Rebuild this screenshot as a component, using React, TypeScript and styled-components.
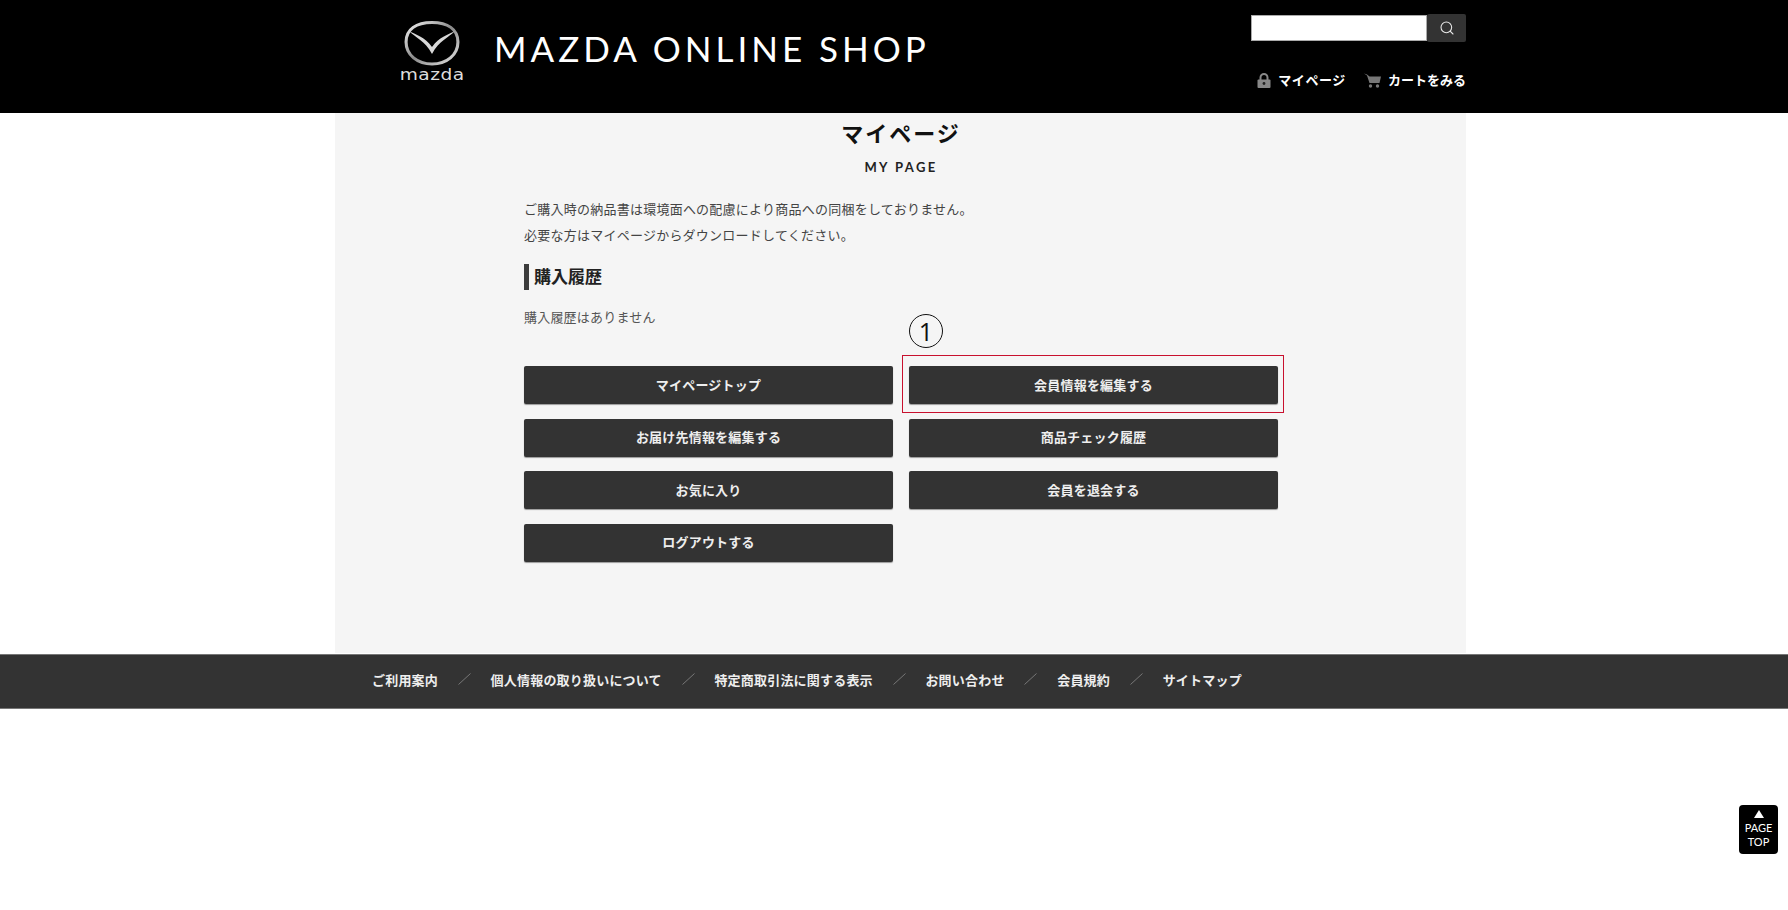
import React from 'react';
import styled, { createGlobalStyle } from 'styled-components';
import { Search } from 'lucide-react';

const JP = `"Noto Sans CJK JP", "Noto Sans", sans-serif`;

const GlobalStyle = createGlobalStyle`
  html, body { margin: 0; padding: 0; background: #fff; }
  body { font-family: ${JP}; color: #444; }
  * { box-sizing: border-box; }
`;

const Header = styled.header`
  height: 113px;
  background: #000;
`;

const HeaderInner = styled.div`
  width: 1131px;
  height: 100%;
  margin-left: 335px;
  padding-left: 65px;
  display: flex;
  justify-content: space-between;
`;

const Brand = styled.div`
  display: flex;
  align-items: flex-start;
  padding-top: 20px;
`;

const LogoMark = styled.div`
  width: 64px;
  display: flex;
  flex-direction: column;
  align-items: center;
`;

const WordMark = styled.span`
  font-family: "DejaVu Sans", sans-serif;
  font-size: 15px;
  line-height: 15px;
  margin-top: 2px;
  letter-spacing: 0.4px;
  color: #ddd;
  transform: scaleX(1.24);
`;

const ShopName = styled.div`
  margin: 10px 0 0 30px;
  font-family: "Lato", sans-serif;
  font-weight: 400;
  font-size: 35px;
  line-height: 36px;
  letter-spacing: 4px;
  color: #fff;
  white-space: nowrap;
`;

const HeaderTools = styled.div`
  padding-top: 14px;
  display: flex;
  flex-direction: column;
  align-items: flex-end;
`;

const SearchForm = styled.div`
  display: flex;
  height: 28px;
  align-items: center;
`;

const SearchInput = styled.div`
  width: 176px;
  height: 26px;
  background: #fff;
  border: 1px solid #aaa;
`;

const SearchButton = styled.div`
  width: 39px;
  height: 28px;
  background: #333;
  border-radius: 2px;
  display: flex;
  align-items: center;
  justify-content: center;
  color: #e8e8e8;
`;

const HeaderLinks = styled.div`
  margin-top: 28px;
  display: flex;
  align-items: center;
  gap: 18px;
`;

const HeaderLink = styled.a<{ $spacing?: number }>`
  display: flex;
  align-items: center;
  gap: 7px;
  font-size: 13px;
  line-height: 20px;
  font-weight: 700;
  letter-spacing: ${(props) => props.$spacing ?? 0}px;
  color: #fff;
`;

const Panel = styled.main`
  width: 1131px;
  margin-left: 335px;
  padding: 4px 188px 91px 189px;
  background: #f5f5f5;
`;

const Title = styled.h1`
  margin: 0;
  text-align: center;
  font-size: 22px;
  line-height: 30px;
  font-weight: 700;
  letter-spacing: 2px;
  color: #111;
`;

const Subtitle = styled.p`
  margin: 10px 0 0;
  text-align: center;
  font-family: "Lato", sans-serif;
  font-size: 13px;
  line-height: 20px;
  font-weight: 700;
  letter-spacing: 2.4px;
  color: #222;
`;

const Notice = styled.p`
  margin: 19px 0 0;
  font-size: 13px;
  line-height: 26px;
  letter-spacing: 0.24px;
  color: #444;
`;

const SectionHeading = styled.h2`
  margin: 16px 0 0;
  height: 26px;
  padding: 0 0 2px 5px;
  border-left: 5px solid #3c3c3c;
  font-size: 17px;
  line-height: 24px;
  font-weight: 700;
  color: #222;
`;

const EmptyText = styled.p`
  margin: 18px 0 0;
  font-size: 13px;
  line-height: 18px;
  letter-spacing: 0.2px;
  color: #555;
`;

const ButtonGrid = styled.div`
  margin-top: 40px;
  display: grid;
  grid-template-columns: 369px 369px;
  column-gap: 16px;
  row-gap: 14.5px;
`;

const Cell = styled.div`
  position: relative;
`;

const MenuButton = styled.a`
  display: flex;
  height: 38px;
  padding-bottom: 2px;
  align-items: center;
  justify-content: center;
  background: #333;
  border-radius: 2px;
  box-shadow: 0 1px 1px #999;
  font-size: 13px;
  font-weight: 700;
  letter-spacing: 0.2px;
  color: #eee;
`;

const Highlight = styled.div`
  position: absolute;
  inset: -11px -6px -9px -7px;
  border: 1px solid #c8102e;
  pointer-events: none;
`;

const Marker = styled.div`
  position: absolute;
  left: 0;
  top: -52px;
  width: 34px;
  height: 34px;
  border: 1px solid #111;
  border-radius: 50%;
  display: flex;
  align-items: center;
  justify-content: center;
  font-family: "Open Sans", sans-serif;
  font-size: 25px;
  font-weight: 400;
  line-height: 1;
  color: #111;
`;

const Footer = styled.footer`
  margin-top: 1px;
  height: 55px;
  background: #333;
  border-top: 1px solid #777;
  border-bottom: 1px solid #777;
  padding: 0 0 4px 372px;
  display: flex;
  align-items: center;
  gap: 19.8px;
`;

const FooterLink = styled.a`
  font-size: 13px;
  font-weight: 700;
  letter-spacing: 0.2px;
  color: #eee;
  white-space: nowrap;
`;

const PageTop = styled.a`
  position: fixed;
  left: 1739px;
  top: 805px;
  width: 39px;
  height: 49px;
  background: #000;
  border-radius: 4px;
  display: flex;
  flex-direction: column;
  align-items: center;
  padding-top: 5px;
  font-family: "Lato", sans-serif;
  font-size: 11px;
  line-height: 14px;
  color: #fff;
  text-align: center;
`;

const Triangle = styled.span`
  width: 0;
  height: 0;
  margin-bottom: 3px;
  border-left: 5px solid transparent;
  border-right: 5px solid transparent;
  border-bottom: 8px solid #fff;
`;

const Emblem = () => (
  <svg width="56" height="46" viewBox="0 0 54 46" preserveAspectRatio="none" fill="none">
    <defs>
      <linearGradient id="ring" x1="0" y1="0" x2="1" y2="1">
        <stop offset="0" stopColor="#f2f2f2" />
        <stop offset="0.5" stopColor="#8a8a8a" />
        <stop offset="1" stopColor="#e4e4e4" />
      </linearGradient>
    </defs>
    <path
      d="M27 2.5C42 2.5 52 9 52 22C52 35 41 44 27 44C13 44 2 35 2 22C2 9 12 2.5 27 2.5Z"
      stroke="url(#ring)"
      strokeWidth="3"
    />
    <path
      d="M5 11C11 18 20 20 27 34C34 20 43 18 49 11C42 15 34 17 27 27C20 17 12 15 5 11Z"
      fill="#d8d8d8"
    />
  </svg>
);

const LockIcon = () => (
  <svg width="14" height="15" viewBox="0 0 14 15">
    <path d="M3.5 7V4.5a3.5 3.5 0 0 1 7 0V7" fill="none" stroke="#888" strokeWidth="2" />
    <rect x="0.5" y="6.5" width="13" height="8.5" rx="1" fill="#888" />
    <circle cx="7" cy="10.5" r="1.4" fill="#222" />
  </svg>
);

const CartIcon = () => (
  <svg width="17" height="15" viewBox="0 0 17 15">
    <path d="M0 0.5L3 1.5L5.5 3.5H17L15.5 10H5.5L3 2.5Z" fill="#777" />
    <circle cx="6.5" cy="13" r="1.7" fill="#777" />
    <circle cx="13.5" cy="13" r="1.7" fill="#777" />
  </svg>
);

const Slash = () => (
  <svg width="13" height="12" viewBox="0 0 13 12">
    <line x1="0.5" y1="11.5" x2="12.5" y2="0.5" stroke="#777" strokeWidth="1" />
  </svg>
);

const footerLinks = [
  'ご利用案内',
  '個人情報の取り扱いについて',
  '特定商取引法に関する表示',
  'お問い合わせ',
  '会員規約',
  'サイトマップ',
];

const App: React.FC = () => (
  <>
    <GlobalStyle />
    <Header>
      <HeaderInner>
        <Brand>
          <LogoMark>
            <Emblem />
            <WordMark>mazda</WordMark>
          </LogoMark>
          <ShopName>MAZDA ONLINE SHOP</ShopName>
        </Brand>
        <HeaderTools>
          <SearchForm>
            <SearchInput />
            <SearchButton>
              <Search size={16} strokeWidth={1.6} />
            </SearchButton>
          </SearchForm>
          <HeaderLinks>
            <HeaderLink $spacing={0.6}>
              <LockIcon />
              マイページ
            </HeaderLink>
            <HeaderLink>
              <CartIcon />
              カートをみる
            </HeaderLink>
          </HeaderLinks>
        </HeaderTools>
      </HeaderInner>
    </Header>
    <Panel>
      <Title>マイページ</Title>
      <Subtitle>MY PAGE</Subtitle>
      <Notice>
        ご購入時の納品書は環境面への配慮により商品への同梱をしておりません。
        <br />
        必要な方はマイページからダウンロードしてください。
      </Notice>
      <SectionHeading>購入履歴</SectionHeading>
      <EmptyText>購入履歴はありません</EmptyText>
      <ButtonGrid>
        <Cell>
          <MenuButton>マイページトップ</MenuButton>
        </Cell>
        <Cell>
          <MenuButton>会員情報を編集する</MenuButton>
          <Highlight />
          <Marker>1</Marker>
        </Cell>
        <Cell>
          <MenuButton>お届け先情報を編集する</MenuButton>
        </Cell>
        <Cell>
          <MenuButton>商品チェック履歴</MenuButton>
        </Cell>
        <Cell>
          <MenuButton>お気に入り</MenuButton>
        </Cell>
        <Cell>
          <MenuButton>会員を退会する</MenuButton>
        </Cell>
        <Cell>
          <MenuButton>ログアウトする</MenuButton>
        </Cell>
      </ButtonGrid>
    </Panel>
    <Footer>
      {footerLinks.map((label, i) => (
        <React.Fragment key={label}>
          {i > 0 && <Slash />}
          <FooterLink>{label}</FooterLink>
        </React.Fragment>
      ))}
    </Footer>
    <PageTop>
      <Triangle />
      PAGE
      <br />
      TOP
    </PageTop>
  </>
);

export default App;
